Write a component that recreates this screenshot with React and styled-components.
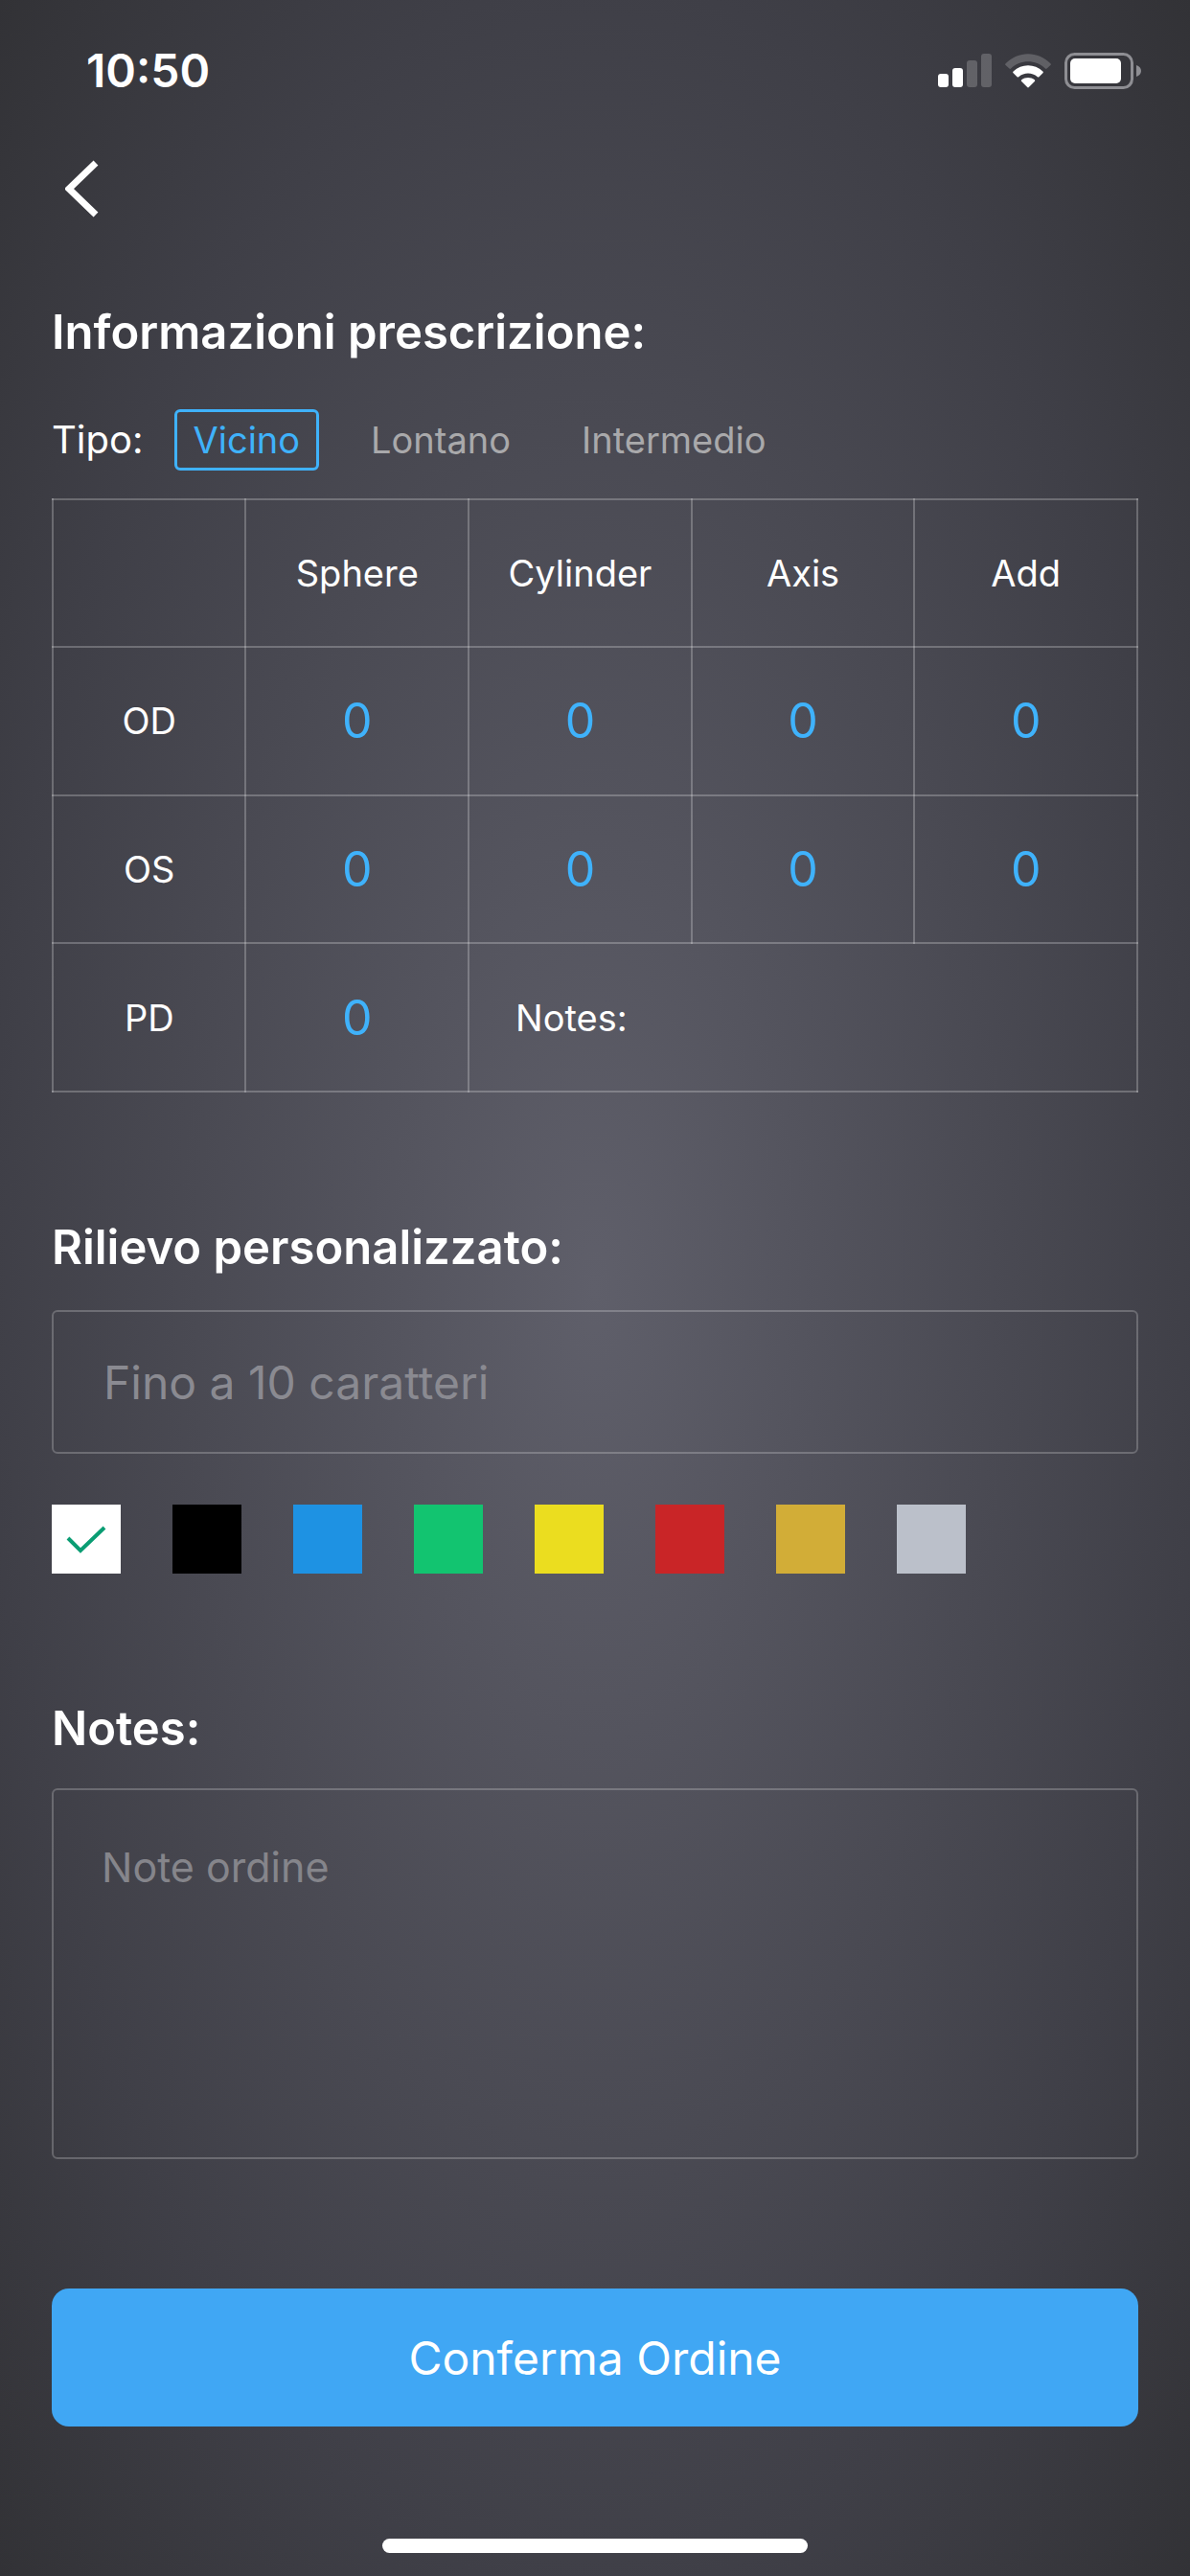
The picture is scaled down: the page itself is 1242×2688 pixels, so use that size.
import React, { useState } from "react";
import styled, { createGlobalStyle } from "styled-components";

const TYPES = ["Vicino", "Lontano", "Intermedio"];
const COLUMNS = ["Sphere", "Cylinder", "Axis", "Add"];
const EYES = ["OD", "OS"];

const COLORS = [
  { name: "Bianco", value: "#ffffff" },
  { name: "Nero", value: "#000000" },
  { name: "Blu", value: "#1e92e3" },
  { name: "Verde", value: "#12c470" },
  { name: "Giallo", value: "#ebdd1f" },
  { name: "Rosso", value: "#c92527" },
  { name: "Oro", value: "#d2ad37" },
  { name: "Argento", value: "#bbc0ca" },
];

const SignalIcon = () => (
  <svg width="56" height="36" viewBox="0 0 56 36" fill="#ffffff">
    <rect x="0" y="21" width="11" height="14" rx="3" />
    <rect x="15" y="15" width="11" height="20" rx="3" />
    <rect x="30" y="7" width="11" height="28" rx="3" opacity="0.2" />
    <rect x="45" y="0" width="11" height="35" rx="3" opacity="0.2" />
  </svg>
);

const WifiIcon = () => (
  <svg width="48" height="36" viewBox="0 0 48 36" fill="#ffffff">
    <path
      d="M0.6 10.2 C13.6 -3.2 34.4 -3.2 47.4 10.2 C48 10.9 48 11.4 47.4 12 L43.6 15.6 C43 16.2 42.5 16.2 41.9 15.6 C31.9 5.9 16.1 5.9 6.1 15.6 C5.5 16.2 5 16.2 4.4 15.6 L0.6 12 C0 11.4 0 10.9 0.6 10.2 Z"
      opacity="0.2"
    />
    <path d="M8.6 18.6 C17.2 10.2 30.8 10.2 39.4 18.6 C40 19.2 40 19.7 39.4 20.3 L35.4 24.2 C34.9 24.7 34.4 24.7 33.8 24.2 C28.2 19.4 19.8 19.4 14.2 24.2 C13.6 24.7 13.1 24.7 12.6 24.2 L8.6 20.3 C8 19.7 8 19.2 8.6 18.6 Z" />
    <path d="M17.2 27.3 C21 24.2 27 24.2 30.8 27.3 C31.4 27.8 31.4 28.3 30.8 28.9 L24.8 35.1 C24.3 35.6 23.7 35.6 23.2 35.1 L17.2 28.9 C16.6 28.3 16.6 27.8 17.2 27.3 Z" />
  </svg>
);

const BatteryIcon = () => (
  <svg width="80" height="38" viewBox="0 0 80 38">
    <rect
      x="1.5"
      y="1.5"
      width="69"
      height="35"
      rx="9"
      fill="none"
      stroke="#8e8e93"
      strokeWidth="3"
    />
    <rect x="6" y="6" width="53" height="26" rx="5" fill="#ffffff" />
    <path d="M75 13 C78 14 80 16 80 19 C80 22 78 24 75 25 Z" fill="#8e8e93" />
  </svg>
);

const App = () => {
  const [type, setType] = useState("Vicino");
  const [color, setColor] = useState("#ffffff");

  return (
    <Page>
      <GlobalStyle />
      <StatusBar>
        <Time>10:50</Time>
        <StatusIcons>
          <SignalIcon />
          <WifiIcon />
          <BatteryIcon />
        </StatusIcons>
      </StatusBar>

      <Content>
        <BackButton type="button" aria-label="Indietro">
          <svg width="36" height="60" viewBox="0 0 36 60" fill="none">
            <path d="M32 3 L4 30 L32 57" stroke="#ffffff" strokeWidth="7" />
          </svg>
        </BackButton>

        <Title>Informazioni prescrizione:</Title>
        <TypeRow>
          <TypeLabel>Tipo:</TypeLabel>
          {TYPES.map((item) => (
            <TypeButton
              key={item}
              type="button"
              $active={item === type}
              aria-pressed={item === type}
              onClick={() => setType(item)}
            >
              {item}
            </TypeButton>
          ))}
        </TypeRow>

        <Table>
          <colgroup>
            <LabelCol />
            <col span={4} />
          </colgroup>
          <thead>
            <tr>
              <Cell />
              {COLUMNS.map((column) => (
                <Head key={column} scope="col">
                  {column}
                </Head>
              ))}
            </tr>
          </thead>
          <tbody>
            {EYES.map((eye) => (
              <tr key={eye}>
                <Head scope="row">{eye}</Head>
                {COLUMNS.map((column) => (
                  <Cell key={column}>
                    <Value type="button" aria-label={`${eye} ${column}`}>
                      0
                    </Value>
                  </Cell>
                ))}
              </tr>
            ))}
            <tr>
              <Head scope="row">PD</Head>
              <Cell>
                <Value type="button" aria-label="PD">
                  0
                </Value>
              </Cell>
              <Cell colSpan={3}>
                <NotesLabel>
                  Notes:
                  <NotesInput type="text" />
                </NotesLabel>
              </Cell>
            </tr>
          </tbody>
        </Table>

        <Section>
          <Title as="label" htmlFor="engraving">
            Rilievo personalizzato:
          </Title>
          <TextInput
            id="engraving"
            type="text"
            maxLength={10}
            placeholder="Fino a 10 caratteri"
          />
          <Swatches>
            {COLORS.map((item) => (
              <Swatch key={item.value} $color={item.value}>
                <SwatchRadio
                  type="radio"
                  name="color"
                  aria-label={item.name}
                  checked={item.value === color}
                  onChange={() => setColor(item.value)}
                />
                {item.value === color && (
                  <svg width="42" height="30" viewBox="0 0 42 30" fill="none">
                    <path
                      d="M2 14 L15 27 L40 3"
                      stroke="#0a9d73"
                      strokeWidth="4"
                    />
                  </svg>
                )}
              </Swatch>
            ))}
          </Swatches>
        </Section>

        <Section>
          <Title as="label" htmlFor="notes">
            Notes:
          </Title>
          <TextArea id="notes" placeholder="Note ordine" />
        </Section>

        <Confirm type="button">Conferma Ordine</Confirm>
      </Content>

      <HomeIndicator />
    </Page>
  );
};

export default App;

const GlobalStyle = createGlobalStyle`
  * {
    box-sizing: border-box;
  }

  body {
    margin: 0;
    background-color: #333338;
    font-family: Inter, "Liberation Sans", sans-serif;
  }

  button,
  input,
  textarea {
    margin: 0;
    font-family: inherit;
  }
`;

const Page = styled.div`
  display: flex;
  flex-direction: column;
  min-height: 100vh;
  background: radial-gradient(
    ellipse farthest-corner at 50% 50%,
    #5f5f6a 0%,
    #3f3f47 72%,
    #323236 100%
  );
  color: #ffffff;
`;

const StatusBar = styled.header`
  display: flex;
  justify-content: space-between;
  align-items: center;
  height: 148px;
  padding: 0 51px 0 90px;
`;

const Time = styled.span`
  font-size: 48px;
  font-weight: 600;
  line-height: 60px;
`;

const StatusIcons = styled.div`
  display: flex;
  align-items: center;
  gap: 14px;
`;

const Content = styled.main`
  display: flex;
  flex-direction: column;
  padding: 0 54px;
`;

const BackButton = styled.button`
  display: flex;
  align-self: flex-start;
  margin-top: 19px;
  padding: 0 14px;
  border: 0;
  background: none;
`;

const Title = styled.h2`
  margin: 90px 0 0;
  font-size: 49px;
  font-weight: 600;
  line-height: 60px;
`;

const TypeRow = styled.div`
  display: flex;
  align-items: center;
  margin-top: 50px;
`;

const TypeLabel = styled.span`
  margin-right: 32px;
  font-size: 40px;
  line-height: 60px;
`;

const TypeButton = styled.button`
  height: 64px;
  margin-right: 34px;
  padding: 0 17px;
  border: 3px solid ${({ $active }) => ($active ? "#3fb2fb" : "transparent")};
  border-radius: 6px;
  background: none;
  color: ${({ $active }) => ($active ? "#3fb2fb" : "#a9a9ab")};
  font-size: 38px;
`;

const Table = styled.table`
  width: 100%;
  height: 620px;
  margin-top: 29px;
  border-collapse: collapse;
  table-layout: fixed;
`;

const LabelCol = styled.col`
  width: 17.8%;
`;

const Cell = styled.td`
  height: 154px;
  padding: 0;
  border: 2px solid rgba(255, 255, 255, 0.24);
  text-align: center;
`;

const Head = styled.th`
  height: 154px;
  padding: 0;
  border: 2px solid rgba(255, 255, 255, 0.24);
  font-size: 38px;
  font-weight: 400;
`;

const Value = styled.button`
  width: 100%;
  padding: 0;
  border: 0;
  background: none;
  color: #3fb2fb;
  font-size: 50px;
  line-height: 60px;
`;

const NotesLabel = styled.label`
  display: flex;
  align-items: center;
  padding: 0 48px;
  font-size: 38px;
`;

const NotesInput = styled.input`
  flex: 1;
  min-width: 0;
  padding: 0 16px;
  border: 0;
  background: none;
  color: #ffffff;
  font-size: 38px;
`;

const Section = styled.section`
  display: flex;
  flex-direction: column;
  margin-top: 42px;
`;

const TextInput = styled.input`
  height: 150px;
  margin-top: 35px;
  padding: 0 52px;
  border: 2px solid rgba(255, 255, 255, 0.22);
  border-radius: 6px;
  background: none;
  color: #ffffff;
  font-size: 48px;

  &::placeholder {
    color: #8a8a91;
    opacity: 1;
  }
`;

const Swatches = styled.div`
  display: flex;
  gap: 54px;
  margin-top: 53px;
`;

const Swatch = styled.label`
  display: flex;
  justify-content: center;
  align-items: center;
  width: 72px;
  height: 72px;
  background-color: ${({ $color }) => $color};
`;

const SwatchRadio = styled.input`
  position: absolute;
  opacity: 0;
`;

const TextArea = styled.textarea`
  height: 387px;
  margin-top: 32px;
  padding: 50px;
  border: 2px solid rgba(255, 255, 255, 0.22);
  border-radius: 6px;
  background: none;
  color: #ffffff;
  font-size: 43px;
  line-height: 60px;
  resize: none;

  &::placeholder {
    color: #85858b;
    opacity: 1;
  }
`;

const Confirm = styled.button`
  height: 144px;
  margin-top: 135px;
  border: 0;
  border-radius: 18px;
  background-color: #40a7f4;
  color: #ffffff;
  font-size: 48px;
`;

const HomeIndicator = styled.div`
  width: 444px;
  max-width: 60%;
  height: 15px;
  margin: auto auto 24px;
  border-radius: 8px;
  background-color: #ffffff;
`;
